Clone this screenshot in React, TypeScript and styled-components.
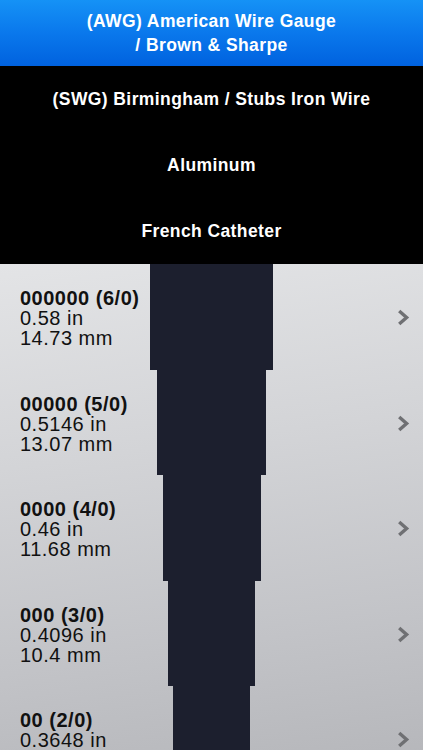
import styled, { createGlobalStyle } from 'styled-components';

const GlobalStyle = createGlobalStyle`
	html, body {
		margin: 0;
		padding: 0;
		background: #000;
	}
	body {
		font-family: 'Liberation Sans', Arial, Helvetica, sans-serif;
		width: 423px;
		height: 750px;
		overflow: hidden;
	}
`;

const PX_PER_INCH = 212;

const otherStandards = ['(SWG) Birmingham / Stubs Iron Wire', 'Aluminum', 'French Catheter'];

const gauges = [
	{ name: '000000 (6/0)', inch: '0.58', mm: '14.73' },
	{ name: '00000 (5/0)', inch: '0.5146', mm: '13.07' },
	{ name: '0000 (4/0)', inch: '0.46', mm: '11.68' },
	{ name: '000 (3/0)', inch: '0.4096', mm: '10.4' },
	{ name: '00 (2/0)', inch: '0.3648', mm: '9.266' },
];

function Chevron() {
	return (
		<svg width="13" height="17" viewBox="0 0 13 17">
			<path d="M2.2 2 L9.6 8.5 L2.2 15" fill="none" stroke="#6f7073" strokeWidth="3.4" strokeLinejoin="miter" />
		</svg>
	);
}

function App() {
	return (
		<Layout>
			<GlobalStyle />
			<SelectedHeader>
				(AWG) American Wire Gauge
				<br />/ Brown &amp; Sharpe
			</SelectedHeader>
			<StandardMenu>
				{otherStandards.map(s => (
					<StandardItem key={s}>{s}</StandardItem>
				))}
			</StandardMenu>
			<GaugeList>
				{gauges.map(g => (
					<GaugeRow key={g.name}>
						<GaugeInfo>
							<strong>{g.name}</strong>
							<span>{g.inch} in</span>
							<span>{g.mm} mm</span>
						</GaugeInfo>
						<Wire style={{ width: Math.round(parseFloat(g.inch) * PX_PER_INCH) }} />
						<ChevronBox>
							<Chevron />
						</ChevronBox>
					</GaugeRow>
				))}
			</GaugeList>
		</Layout>
	);
}

const Layout = styled.div`
	display: flex;
	flex-direction: column;
	width: 423px;
	height: 750px;
	overflow: hidden;
`;

const SelectedHeader = styled.div`
	height: 66px;
	flex-shrink: 0;
	display: flex;
	align-items: center;
	justify-content: center;
	text-align: center;
	background: linear-gradient(to bottom, #1592f6 0%, #0a78ec 50%, #0062df 100%);
	color: #fff;
	font-weight: bold;
	font-size: 17.5px;
	letter-spacing: 0.4px;
	line-height: 24px;
`;

const StandardMenu = styled.div`
	display: flex;
	flex-direction: column;
	background: #000;
	flex-shrink: 0;
`;

const StandardItem = styled.div`
	height: 66px;
	display: flex;
	align-items: center;
	justify-content: center;
	color: #fff;
	font-weight: bold;
	font-size: 17.5px;
	letter-spacing: 0.4px;
`;

const GaugeList = styled.div`
	flex: 1;
	display: flex;
	flex-direction: column;
	background: linear-gradient(172deg, #e3e4e6 0%, #d3d4d7 35%, #c2c3c7 70%, #b3b4b8 100%);
`;

const GaugeRow = styled.div`
	height: 105.5px;
	flex-shrink: 0;
	display: grid;
	grid-template-columns: 1fr auto 1fr;
	align-items: center;
`;

const GaugeInfo = styled.div`
	display: flex;
	flex-direction: column;
	padding-left: 20px;
	padding-top: 3px;
	font-size: 20px;
	letter-spacing: 0.5px;
	line-height: 20px;
	color: #111;
	white-space: nowrap;

	strong {
		font-weight: bold;
	}
`;

const Wire = styled.div`
	height: 100%;
	background: #1c1f2e;
`;

const ChevronBox = styled.div`
	justify-self: end;
	padding-right: 13px;
	padding-top: 2px;
	display: flex;
	align-items: center;
`;

export default App;
